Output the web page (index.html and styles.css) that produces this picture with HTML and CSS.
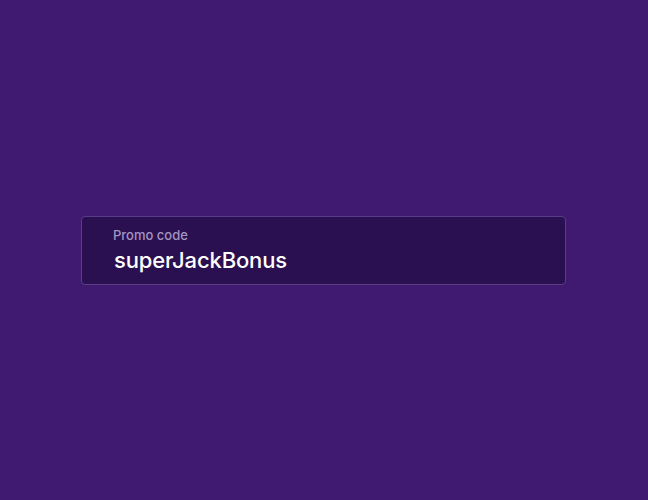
FILE: index.html
```html
<!DOCTYPE html>
<html>
<head>
<meta charset="utf-8">
<link rel="stylesheet" href="styles.css">
</head>
<body>
<div class="page">
  <div class="field">
    <label class="label">Promo code</label>
    <div class="value">superJackBonus</div>
  </div>
</div>
</body>
</html>
```
FILE: styles.css
```css
html, body {
  margin: 0;
  padding: 0;
  background: #3f1a70;
  font-family: Inter, "Noto Sans", sans-serif;
}
.page {
  width: 648px;
  height: 500px;
  padding-top: 216px;
  padding-left: 81px;
  box-sizing: border-box;
}
.field {
  width: 485px;
  height: 69px;
  box-sizing: border-box;
  background: #2a1050;
  border: 1px solid #5a3d86;
  border-radius: 4px;
  padding: 10px 0 0 31px;
}
.label {
  display: block;
  font-size: 13px;
  line-height: 16px;
  font-weight: 500;
  color: #a495c2;
}
.value {
  margin-top: 3px;
  padding-left: 1px;
  font-size: 22px;
  line-height: 28px;
  font-weight: 500;
  letter-spacing: -0.15px;
  color: #ffffff;
}
```
